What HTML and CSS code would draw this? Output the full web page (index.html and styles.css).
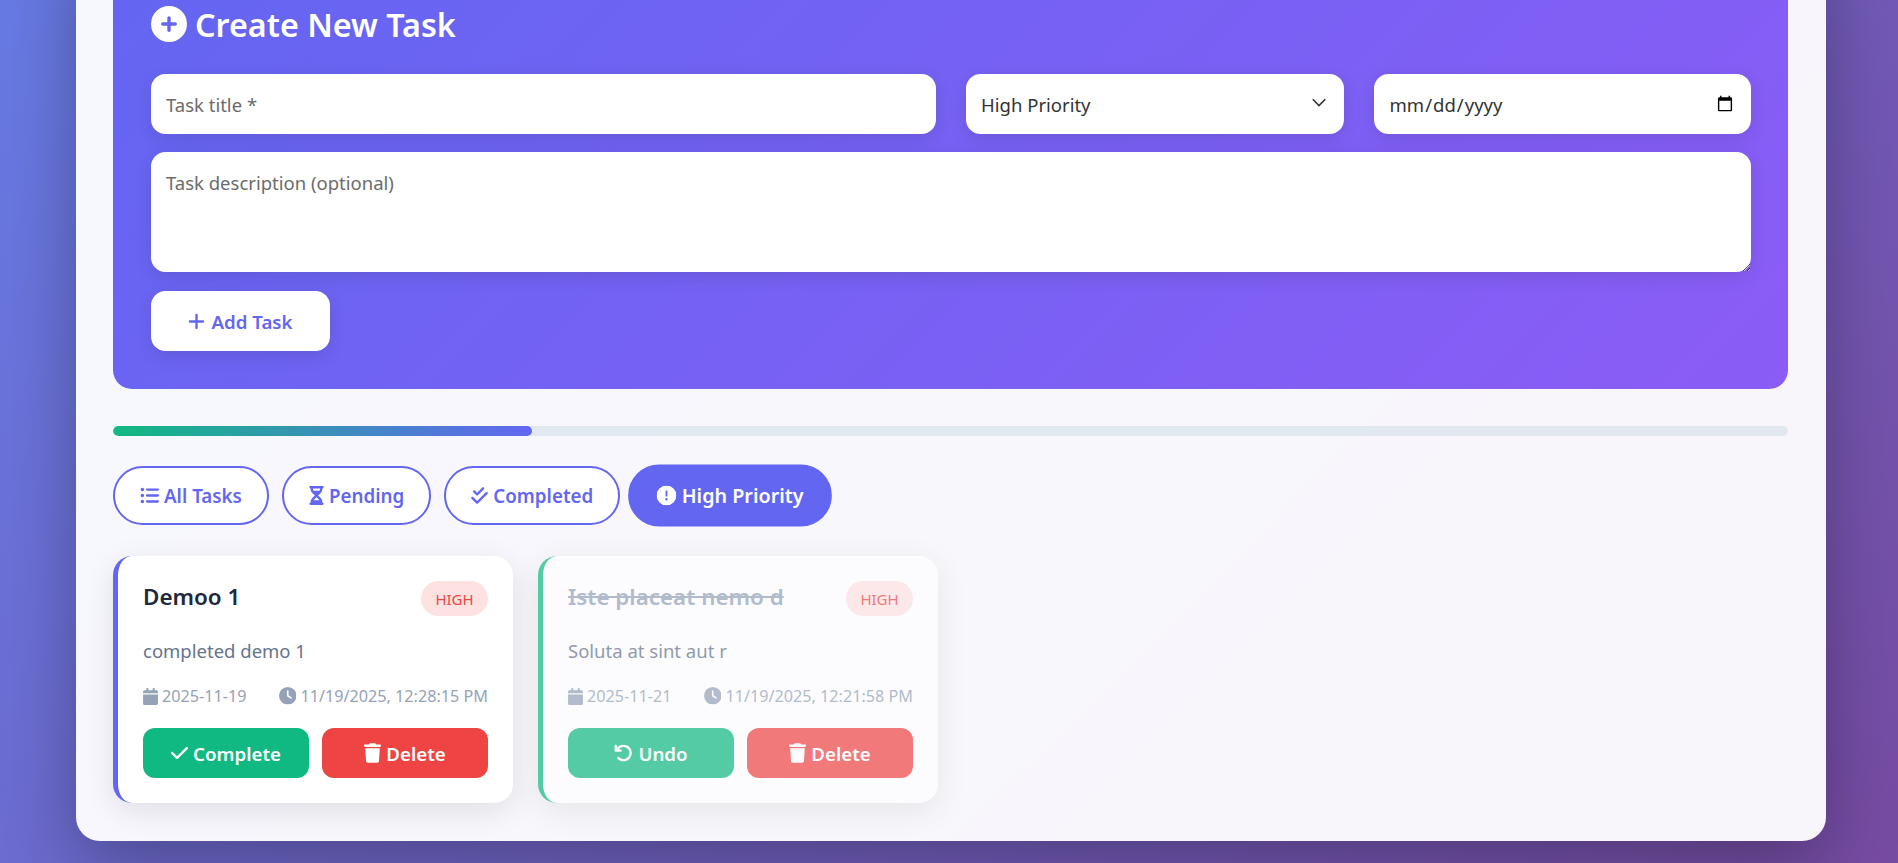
FILE: index.html
```html
<!DOCTYPE html>
<html lang="en">
<head>
<meta charset="utf-8">
<title>Task Manager</title>
<link rel="stylesheet" href="styles.css">
</head>
<body>
<svg class="sprite" aria-hidden="true">
  <symbol id="i-circle-plus" viewBox="0 0 512 512"><path d="M256 512A256 256 0 1 0 256 0a256 256 0 1 0 0 512zM232 344V280H168c-13.3 0-24-10.7-24-24s10.7-24 24-24h64V168c0-13.3 10.7-24 24-24s24 10.7 24 24v64h64c13.3 0 24 10.7 24 24s-10.7 24-24 24H280v64c0 13.3-10.7 24-24 24s-24-10.7-24-24z"/></symbol>
  <symbol id="i-plus" viewBox="0 0 448 512"><path d="M256 80c0-17.7-14.3-32-32-32s-32 14.3-32 32V224H48c-17.7 0-32 14.3-32 32s14.3 32 32 32H192V432c0 17.7 14.3 32 32 32s32-14.3 32-32V288H400c17.7 0 32-14.3 32-32s-14.3-32-32-32H256V80z"/></symbol>
  <symbol id="i-list" viewBox="0 0 512 512"><path d="M64 144a48 48 0 1 0 0-96 48 48 0 1 0 0 96zM192 64c-17.7 0-32 14.3-32 32s14.3 32 32 32H480c17.7 0 32-14.3 32-32s-14.3-32-32-32H192zm0 160c-17.7 0-32 14.3-32 32s14.3 32 32 32H480c17.7 0 32-14.3 32-32s-14.3-32-32-32H192zm0 160c-17.7 0-32 14.3-32 32s14.3 32 32 32H480c17.7 0 32-14.3 32-32s-14.3-32-32-32H192zM64 304a48 48 0 1 0 0-96 48 48 0 1 0 0 96zm48 112a48 48 0 1 0 -96 0 48 48 0 1 0 96 0z"/></symbol>
  <symbol id="i-hourglass" viewBox="0 0 384 512"><path d="M32 0C14.3 0 0 14.3 0 32S14.3 64 32 64V75c0 42.4 16.9 83.1 46.9 113.1L146.7 256 78.9 323.9C48.9 353.9 32 394.6 32 437v11c-17.7 0-32 14.3-32 32s14.3 32 32 32H64 320h32c17.7 0 32-14.3 32-32s-14.3-32-32-32V437c0-42.4-16.9-83.1-46.9-113.1L237.3 256l67.9-67.9c30-30 46.9-70.7 46.9-113.1V64c17.7 0 32-14.3 32-32s-14.3-32-32-32H320 64 32zM96 75V64H288V75c0 19-5.6 37.4-16 53H112c-10.3-15.6-16-34-16-53zm16 309c3.5-5.3 7.6-10.3 12.1-14.9L192 301.3l67.9 67.9c4.6 4.6 8.6 9.6 12.1 14.9H112z"/></symbol>
  <symbol id="i-check-double" viewBox="0 0 448 512"><path d="M342.6 86.6c12.5-12.5 12.5-32.8 0-45.3s-32.8-12.5-45.3 0L160 178.7l-57.4-57.4c-12.5-12.5-32.8-12.5-45.3 0s-12.5 32.8 0 45.3l80 80c12.5 12.5 32.8 12.5 45.3 0l160-160zm96 128c12.5-12.5 12.5-32.8 0-45.3s-32.8-12.5-45.3 0L160 402.7 54.6 297.4c-12.5-12.5-32.8-12.5-45.3 0s-12.5 32.8 0 45.3l128 128c12.5 12.5 32.8 12.5 45.3 0l256-256z"/></symbol>
  <symbol id="i-exclaim" viewBox="0 0 512 512"><path d="M256 512A256 256 0 1 0 256 0a256 256 0 1 0 0 512zm0-384c13.3 0 24 10.7 24 24V264c0 13.3-10.7 24-24 24s-24-10.7-24-24V152c0-13.3 10.7-24 24-24zM224 352a32 32 0 1 1 64 0 32 32 0 1 1 -64 0z"/></symbol>
  <symbol id="i-calendar" viewBox="0 0 448 512"><path d="M96 32V64H48C21.5 64 0 85.5 0 112v48H448V112c0-26.5-21.5-48-48-48H352V32c0-17.7-14.3-32-32-32s-32 14.3-32 32V64H160V32c0-17.7-14.3-32-32-32S96 14.3 96 32zM448 192H0V464c0 26.5 21.5 48 48 48H400c26.5 0 48-21.5 48-48V192z"/></symbol>
  <symbol id="i-clock" viewBox="0 0 512 512"><path d="M256 0a256 256 0 1 1 0 512A256 256 0 1 1 256 0zM232 120V256c0 8 4 15.5 10.7 20l96 64c11 7.4 25.9 4.4 33.3-6.7s4.4-25.9-6.7-33.3L280 243.2V120c0-13.3-10.7-24-24-24s-24 10.7-24 24z"/></symbol>
  <symbol id="i-check" viewBox="0 0 448 512"><path d="M438.6 105.4c12.5 12.5 12.5 32.8 0 45.3l-256 256c-12.5 12.5-32.8 12.5-45.3 0l-128-128c-12.5-12.5-12.5-32.8 0-45.3s32.8-12.5 45.3 0L160 338.7 393.4 105.4c12.5-12.5 32.8-12.5 45.3 0z"/></symbol>
  <symbol id="i-trash" viewBox="0 0 448 512"><path d="M135.2 17.7L128 32H32C14.3 32 0 46.3 0 64S14.3 96 32 96H416c17.7 0 32-14.3 32-32s-14.3-32-32-32H320l-7.2-14.3C307.4 6.8 296.3 0 284.2 0H163.8c-12.1 0-23.2 6.8-28.6 17.7zM416 128H32L53.2 467c1.6 25.3 22.6 45 47.9 45H346.9c25.3 0 46.3-19.7 47.9-45L416 128z"/></symbol>
  <symbol id="i-undo" viewBox="0 0 512 512"><path d="M125.7 160H176c17.7 0 32 14.3 32 32s-14.3 32-32 32H48c-17.7 0-32-14.3-32-32V64c0-17.7 14.3-32 32-32s32 14.3 32 32v51.2L97.6 97.6c87.5-87.5 229.3-87.5 316.8 0s87.5 229.3 0 316.8s-229.3 87.5-316.8 0c-12.5-12.5-12.5-32.8 0-45.3s32.8-12.5 45.3 0c62.5 62.5 163.8 62.5 226.3 0s62.5-163.8 0-226.3s-163.8-62.5-226.3 0L125.7 160z"/></symbol>
  <symbol id="i-chevron" viewBox="0 0 16 16"><path d="M3 5 8 10 13 5" fill="none" stroke="#333" stroke-width="1.3"/></symbol>
</svg>

<main class="container">
  <section class="form-panel">
    <h2 class="form-title"><svg class="title-icon"><use href="#i-circle-plus"/></svg>Create New Task</h2>
    <div class="form-row">
      <input class="field" type="text" placeholder="Task title *">
      <div class="select-wrap">
        <select class="field field-select">
          <option>High Priority</option>
          <option>Medium Priority</option>
          <option>Low Priority</option>
        </select>
        <svg class="chevron"><use href="#i-chevron"/></svg>
      </div>
      <input class="field" type="date">
    </div>
    <textarea class="field field-area" placeholder="Task description (optional)"></textarea>
    <button class="add-btn" type="button"><svg class="icon-add"><use href="#i-plus"/></svg>Add Task</button>
  </section>

  <div class="progress"><div class="progress-fill"></div></div>

  <nav class="filters">
    <button class="pill" type="button"><svg class="icon-pill"><use href="#i-list"/></svg>All Tasks</button>
    <button class="pill" type="button"><svg class="icon-pill icon-narrow"><use href="#i-hourglass"/></svg>Pending</button>
    <button class="pill" type="button"><svg class="icon-pill icon-mid"><use href="#i-check-double"/></svg>Completed</button>
    <button class="pill pill-active" type="button"><svg class="icon-pill"><use href="#i-exclaim"/></svg>High Priority</button>
  </nav>

  <section class="cards">
    <article class="card">
      <header class="card-head">
        <h3 class="card-title">Demoo 1</h3>
        <span class="badge">High</span>
      </header>
      <p class="card-desc">completed demo 1</p>
      <div class="meta">
        <span class="meta-item"><svg class="icon-cal"><use href="#i-calendar"/></svg>2025-11-19</span>
        <span class="meta-item"><svg class="icon-clock"><use href="#i-clock"/></svg>11/19/2025, 12:28:15 PM</span>
      </div>
      <div class="actions">
        <button class="act act-green" type="button"><svg class="icon-act"><use href="#i-check"/></svg>Complete</button>
        <button class="act act-red" type="button"><svg class="icon-act"><use href="#i-trash"/></svg>Delete</button>
      </div>
    </article>

    <article class="card card-done">
      <header class="card-head">
        <h3 class="card-title">Iste placeat nemo d</h3>
        <span class="badge">High</span>
      </header>
      <p class="card-desc">Soluta at sint aut r</p>
      <div class="meta">
        <span class="meta-item"><svg class="icon-cal"><use href="#i-calendar"/></svg>2025-11-21</span>
        <span class="meta-item"><svg class="icon-clock"><use href="#i-clock"/></svg>11/19/2025, 12:21:58 PM</span>
      </div>
      <div class="actions">
        <button class="act act-green" type="button"><svg class="icon-act icon-act-wide"><use href="#i-undo"/></svg>Undo</button>
        <button class="act act-red" type="button"><svg class="icon-act"><use href="#i-trash"/></svg>Delete</button>
      </div>
    </article>
  </section>
</main>
</body>
</html>
```
FILE: styles.css
```css
* { box-sizing: border-box; }

html, body { height: 100%; }

body {
  margin: 0;
  height: 863px;
  overflow: hidden;
  padding-left: 76px;
  background: linear-gradient(135deg, #667eea 0%, #764ba2 100%) left bottom / 100% 1100px no-repeat #667eea;
  font-family: "Noto Sans", "Open Sans", sans-serif;
}

.sprite { width: 0; height: 0; position: absolute; }

svg { fill: currentColor; flex: none; }

.container {
  width: 1750px;
  margin-top: -70px;
  padding: 38px 38px 38px 37px;
  background: rgba(255, 255, 255, 0.95);
  border-radius: 24px;
  box-shadow: 0 24px 72px rgba(0, 0, 0, 0.3);
}

.form-panel {
  padding: 38px 37px 38px 38px;
  border-radius: 19px;
  background: linear-gradient(135deg, #6366f1 0%, #8b5cf6 100%);
  display: flex;
  flex-direction: column;
  align-items: flex-start;
}

.form-title {
  margin: 0 0 32px;
  height: 36px;
  display: flex;
  align-items: center;
  gap: 8px;
  color: #fff;
  font-size: 32.3px;
  font-weight: 600;
  line-height: 36px;
}

.title-icon { width: 36px; height: 36px; }

.form-row {
  width: 100%;
  display: grid;
  grid-template-columns: 2.08fr 1fr 1fr;
  gap: 30px;
  margin-bottom: 18px;
}

.field {
  width: 100%;
  height: 60px;
  border: 0;
  border-radius: 14.5px;
  padding: 1px 15px 0;
  background: #fff;
  color: #333;
  font-family: inherit;
  font-size: 18.5px;
  box-shadow: 0 5px 18px rgba(0, 0, 0, 0.1);
  outline: none;
}

.field::placeholder { color: #6b6b6b; }

.select-wrap { position: relative; }

.field-select { appearance: none; }

.chevron {
  position: absolute;
  right: 15px;
  top: 19px;
  width: 20px;
  height: 20px;
  pointer-events: none;
}

.field-area {
  display: block;
  height: 120px;
  padding: 18px 15px 0;
  margin-bottom: 19px;
}

.add-btn {
  width: 179px;
  height: 60px;
  border: 0;
  border-radius: 14.5px;
  background: #fff;
  color: #6366f1;
  font-family: inherit;
  font-size: 18.7px;
  font-weight: 600;
  display: flex;
  align-items: center;
  justify-content: center;
  gap: 6px;
  box-shadow: 0 5px 18px rgba(0, 0, 0, 0.1);
}

.icon-add { width: 17px; height: 19px; }

.progress {
  height: 10px;
  margin: 37px 0 30px;
  border-radius: 5px;
  background: #e2e8f0;
  overflow: hidden;
}

.progress-fill {
  width: 25%;
  height: 100%;
  border-radius: 5px;
  background: linear-gradient(90deg, #10b981, #6366f1);
}

.filters {
  display: flex;
  gap: 13px;
  margin-bottom: 31px;
}

.pill {
  height: 59px;
  padding: 0 25px;
  border: 2.4px solid #6366f1;
  border-radius: 30px;
  background: #fff;
  color: #6366f1;
  font-family: inherit;
  font-size: 18.8px;
  font-weight: 600;
  display: flex;
  align-items: center;
  gap: 5px;
}

.pill-active {
  background: #6366f1;
  color: #fff;
  transform: scale(1.05);
}

.icon-pill { width: 19px; height: 19px; }
.icon-narrow { width: 15px; }
.icon-mid { width: 17px; }

.cards {
  display: grid;
  grid-template-columns: repeat(auto-fill, 400px);
  gap: 25px;
}

.card {
  height: 247px;
  padding: 25px;
  background: #fff;
  border-left: 5px solid #6366f1;
  border-radius: 19px;
  box-shadow: 0 8px 30px rgba(0, 0, 0, 0.1);
  display: flex;
  flex-direction: column;
}

.card-head {
  display: flex;
  justify-content: space-between;
  align-items: flex-start;
  height: 35px;
  margin-bottom: 22px;
}

.card-title {
  margin: 0;
  color: #1e293b;
  font-size: 22.4px;
  font-weight: 600;
  line-height: 32px;
}

.badge {
  height: 35px;
  width: 67px;
  display: flex;
  align-items: center;
  justify-content: center;
  border-radius: 18px;
  background: #fee2e2;
  color: #ef4444;
  font-size: 15px;
  font-weight: 400;
  text-transform: uppercase;
}

.card-desc {
  margin: 0 0 20px;
  color: #64748b;
  font-size: 18.5px;
  line-height: 26px;
}

.meta {
  display: flex;
  justify-content: space-between;
  color: #94a3b8;
  font-size: 16.2px;
  line-height: 24px;
  margin-bottom: 20px;
}

.meta-item {
  display: flex;
  align-items: center;
  gap: 4px;
}

.icon-cal { width: 15px; height: 17px; }
.icon-clock { width: 17.5px; height: 17.5px; }

.actions {
  display: flex;
  gap: 13px;
}

.act {
  flex: 1;
  height: 50px;
  border: 0;
  border-radius: 12px;
  color: #fff;
  font-family: inherit;
  font-size: 18.7px;
  font-weight: 600;
  display: flex;
  align-items: center;
  justify-content: center;
  gap: 5px;
}

.icon-act { width: 17px; height: 20px; }
.icon-act-wide { width: 19px; }

.act-green { background: #10b981; }
.act-red { background: #ef4444; }

.card-done {
  opacity: 0.7;
  border-left-color: #10b981;
}

.card-done .card-title {
  color: #94a3b8;
  text-decoration: line-through;
}
```
